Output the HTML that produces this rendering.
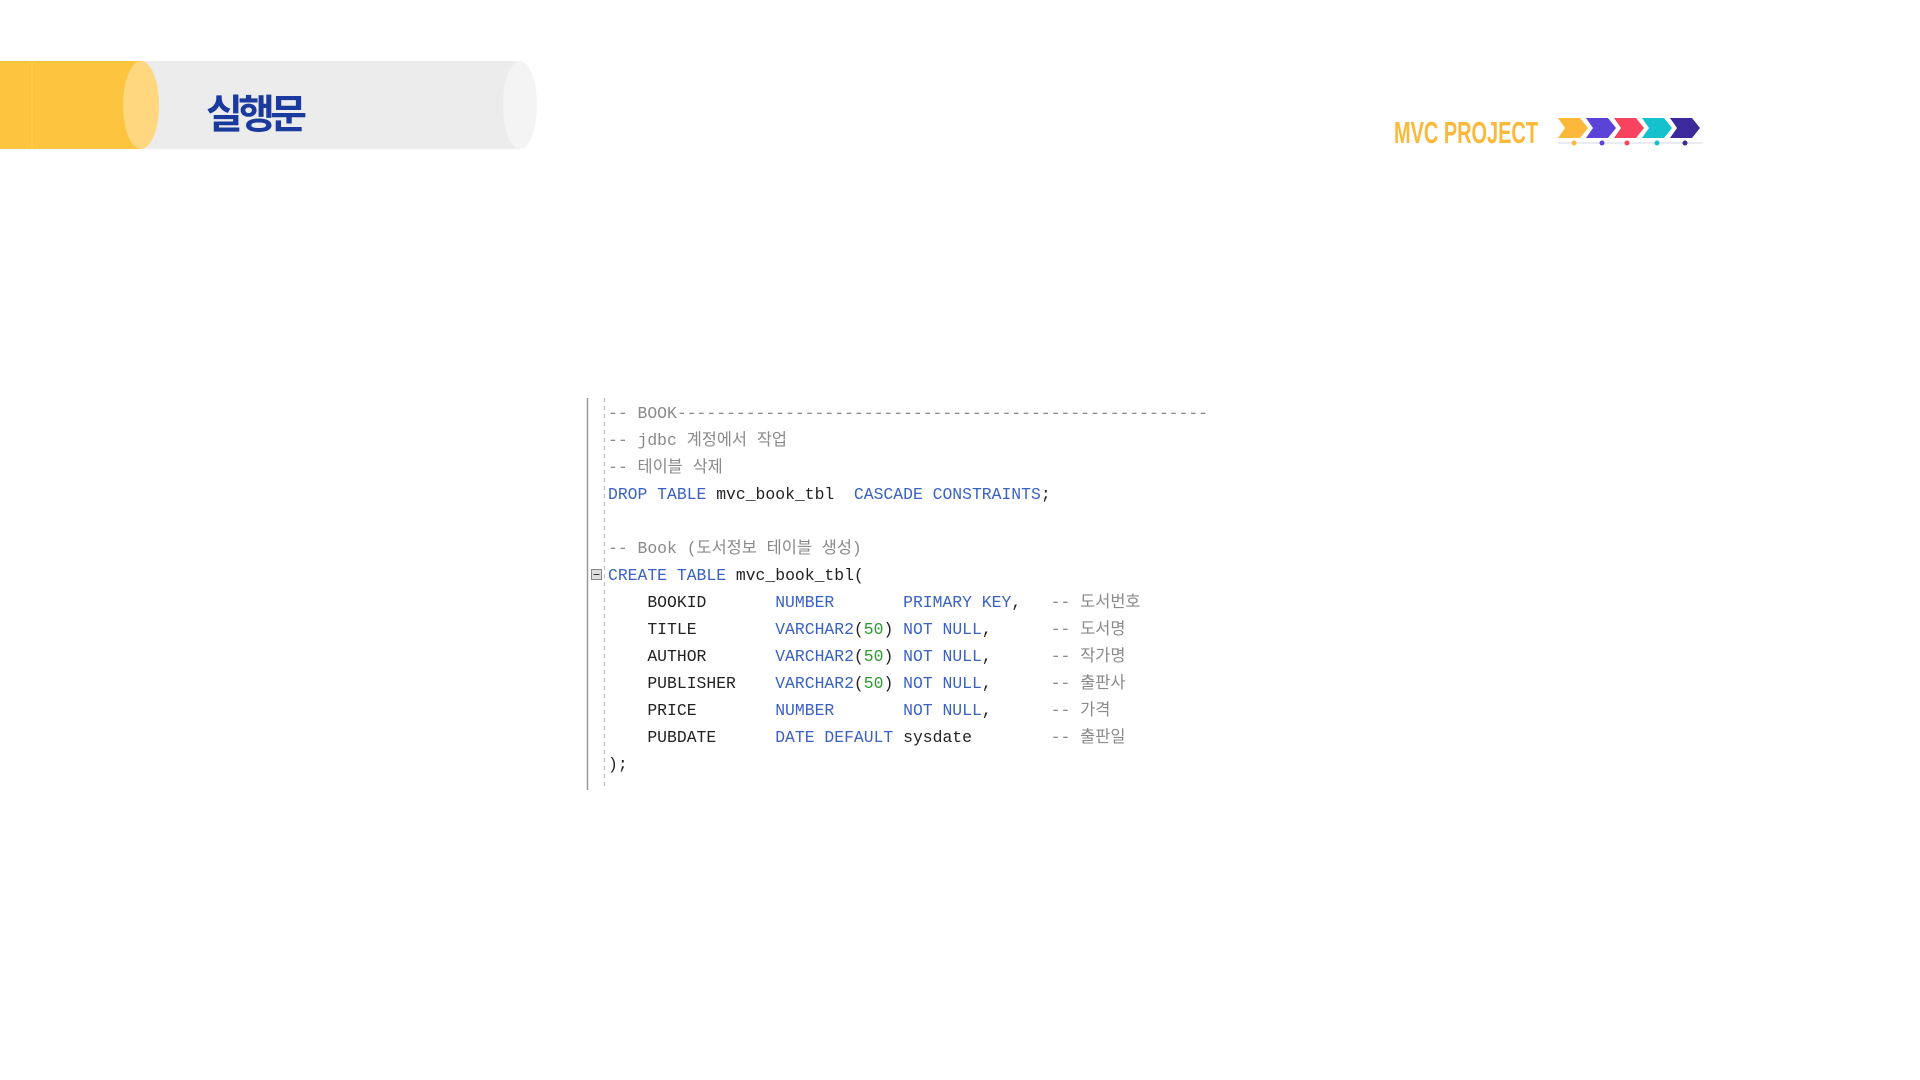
<!DOCTYPE html>
<html><head><meta charset="utf-8"><style>
html,body{margin:0;padding:0;background:#fff;width:1920px;height:1080px;overflow:hidden;position:relative}
.code{position:absolute;left:608px;font-family:"Liberation Mono","Noto Sans CJK KR",monospace;font-size:16.4px;white-space:pre;line-height:27px;color:#222;}
.k{color:#3a62c4}.c{color:#8a8a8a}.g{color:#2e9a2e}
</style></head><body>
<svg width="1920" height="1080" style="position:absolute;left:0;top:0">
  <rect x="0" y="61" width="520" height="88" fill="#ececec"/>
  <ellipse cx="520" cy="105" rx="17" ry="44" fill="#f4f4f4"/>
  <rect x="0" y="61" width="141" height="88" fill="#fdc43f"/>
  <line x1="32" y1="61" x2="32" y2="149" stroke="#ffd05a" stroke-width="1"/>
  <ellipse cx="141" cy="105" rx="18" ry="44" fill="#ffd77e"/>
  <text x="206" y="128" font-family="Noto Sans CJK KR, sans-serif" font-weight="bold" font-size="40" fill="#1b3a9e" textLength="101">실행문</text>
  <text x="1394" y="143" font-family="Liberation Sans Narrow, Liberation Sans, sans-serif" font-weight="bold" font-size="31" fill="#fbb83a" textLength="144" lengthAdjust="spacingAndGlyphs">MVC PROJECT</text>
  <line x1="1558" y1="143" x2="1702" y2="143" stroke="#e3e6f0" stroke-width="1.5"/>
  <g>
    <polygon points="1558,118 1580,118 1588,128 1580,138 1558,138 1565,128" fill="#fbb83a"/>
    <polygon points="1586,118 1608,118 1616,128 1608,138 1586,138 1593,128" fill="#5a43d6"/>
    <polygon points="1614,118 1636,118 1644,128 1636,138 1614,138 1621,128" fill="#f7435e"/>
    <polygon points="1642,118 1664,118 1672,128 1664,138 1642,138 1649,128" fill="#14c1cc"/>
    <polygon points="1670,118 1692,118 1700,128 1692,138 1670,138 1677,128" fill="#3c2a9c"/>
  </g>
  <circle cx="1574" cy="143" r="2.5" fill="#fbb83a"/>
  <circle cx="1602" cy="143" r="2.5" fill="#5a43d6"/>
  <circle cx="1627" cy="143" r="2.5" fill="#f7435e"/>
  <circle cx="1657" cy="143" r="2.5" fill="#14c1cc"/>
  <circle cx="1685" cy="143" r="2.5" fill="#3c2a9c"/>
  <line x1="587.5" y1="398" x2="587.5" y2="790" stroke="#9a9a9a" stroke-width="1.5"/>
  <line x1="604.5" y1="398" x2="604.5" y2="790" stroke="#bbb" stroke-width="1" stroke-dasharray="4,4"/>
  <rect x="591.5" y="569.5" width="10" height="10" fill="#ddd" stroke="#888"/>
  <line x1="593.5" y1="574.5" x2="599.5" y2="574.5" stroke="#333"/>
</svg>
<div class="code" style="top:400px"><span class="c">-- BOOK------------------------------------------------------</span>
<span class="c">-- jdbc 계정에서 작업</span>
<span class="c">-- 테이블 삭제</span>
<span class="k">DROP TABLE</span> mvc_book_tbl  <span class="k">CASCADE CONSTRAINTS</span>;

<span class="c">-- Book (도서정보 테이블 생성)</span>
<span class="k">CREATE TABLE</span> mvc_book_tbl(
    BOOKID       <span class="k">NUMBER</span>       <span class="k">PRIMARY KEY</span>,   <span class="c">-- 도서번호</span>
    TITLE        <span class="k">VARCHAR2</span>(<span class="g">50</span>) <span class="k">NOT NULL</span>,      <span class="c">-- 도서명</span>
    AUTHOR       <span class="k">VARCHAR2</span>(<span class="g">50</span>) <span class="k">NOT NULL</span>,      <span class="c">-- 작가명</span>
    PUBLISHER    <span class="k">VARCHAR2</span>(<span class="g">50</span>) <span class="k">NOT NULL</span>,      <span class="c">-- 출판사</span>
    PRICE        <span class="k">NUMBER</span>       <span class="k">NOT NULL</span>,      <span class="c">-- 가격</span>
    PUBDATE      <span class="k">DATE DEFAULT</span> sysdate        <span class="c">-- 출판일</span>
);</div>
</body></html>
